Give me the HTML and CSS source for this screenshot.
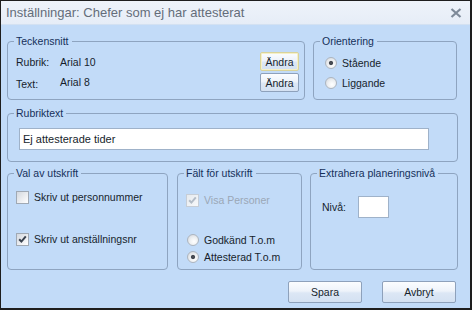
FILE: index.html
```html
<!DOCTYPE html>
<html lang="sv">
<head>
<meta charset="utf-8">
<title>Inställningar</title>
<link rel="stylesheet" href="styles.css">
</head>
<body>
<div class="window">
  <div class="titlebar">
    <span class="title">Inställningar: Chefer som ej har attesterat</span>
    <svg class="close" width="12" height="10" viewBox="0 0 12 10"><path d="M1.5 1 L10.5 9 M10.5 1 L1.5 9" stroke="#7e8a99" stroke-width="2.2" fill="none"/></svg>
  </div>
  <div class="content">
    <div class="row row-top">
      <fieldset class="grp g-font">
        <legend>Teckensnitt</legend>
        <div class="font-grid">
          <span class="lbl">Rubrik:</span><span class="val">Arial 10</span><button class="btn btn-small btn-default">Ändra</button>
          <span class="lbl lbl-low">Text:</span><span class="val val-high">Arial 8</span><button class="btn btn-small">Ändra</button>
        </div>
      </fieldset>
      <fieldset class="grp g-orient">
        <legend>Orientering</legend>
        <div class="orient-list">
          <label class="opt"><span class="radio on"></span>Stående</label>
          <label class="opt"><span class="radio"></span>Liggande</label>
        </div>
      </fieldset>
    </div>
    <fieldset class="grp g-rub">
      <legend>Rubriktext</legend>
      <div class="rub-body"><div class="textbox textbox-wide">Ej attesterade tider</div></div>
    </fieldset>
    <div class="row row-bottom">
      <fieldset class="grp g-val">
        <legend>Val av utskrift</legend>
        <div class="val-list">
          <label class="opt"><span class="check"></span>Skriv ut personnummer</label>
          <label class="opt"><span class="check"><svg width="11" height="11" viewBox="0 0 11 11"><path d="M2.2 5.2 L4.4 7.6 L8.8 2.4" stroke="#3a4350" stroke-width="2" fill="none"/></svg></span>Skriv ut anställningsnr</label>
        </div>
      </fieldset>
      <fieldset class="grp g-falt">
        <legend>Fält för utskrift</legend>
        <div class="falt-list">
          <label class="opt disabled"><span class="check dis"><svg width="11" height="11" viewBox="0 0 11 11"><path d="M2.2 5.2 L4.4 7.6 L8.8 2.4" stroke="#b3bcc7" stroke-width="2" fill="none"/></svg></span>Visa Personer</label>
          <div class="falt-radios">
            <label class="opt"><span class="radio"></span>Godkänd T.o.m</label>
            <label class="opt"><span class="radio on"></span>Attesterad T.o.m</label>
          </div>
        </div>
      </fieldset>
      <fieldset class="grp g-extra">
        <legend>Extrahera planeringsnivå</legend>
        <div class="extra-body">
          <span class="niva-lbl">Nivå:</span><div class="textbox textbox-small"></div>
        </div>
      </fieldset>
    </div>
    <div class="actions">
      <button class="btn btn-big">Spara</button>
      <button class="btn btn-big">Avbryt</button>
    </div>
  </div>
</div>
</body>
</html>
```
FILE: styles.css
```css
html, body {
  margin: 0;
  padding: 0;
  background: #c2dbf8;
}
* { box-sizing: border-box; }

.window {
  width: 472px;
  height: 310px;
  border-top: 1px solid #1e1e1e;
  border-left: 1px solid #1e1e1e;
  border-right: 2px solid #1e1e1e;
  border-bottom: 2px solid #1e1e1e;
  background: #c2dbf8;
  font-family: "Liberation Sans", Arial, sans-serif;
  font-size: 10.5px;
  color: #161e2c;
  overflow: hidden;
}

.titlebar {
  height: 24px;
  display: flex;
  align-items: center;
  justify-content: space-between;
  padding: 0 8px 0 5px;
  background: linear-gradient(#eef3fa, #e6edf7);
  border-bottom: 1px solid #d3e1f2;
}
.title {
  font-size: 13px;
  color: #646d7a;
}
.close { margin-top: 1px; }

.content {
  padding: 10px 0 0 6px;
}

.row { display: flex; }
.row-top { gap: 8px; height: 65px; }
.row-bottom { gap: 8px; height: 103px; margin-top: 5px; }

.grp {
  margin: 0;
  padding: 0;
  min-width: 0;
  border: 1px solid #8ea4c0;
  border-radius: 4px;
  height: 100%;
}
.grp legend {
  margin-left: 6px;
  padding: 0 3px 0 2px;
  line-height: 13px;
  font-size: 10.5px;
  color: #15305a;
}

.g-font { width: 298px; }
.g-orient { width: 144px; }
.g-rub { width: 451px; height: 55px; margin-top: 7px; }
.g-val { width: 161px; }
.g-falt { width: 125px; margin-left: 1px; }
.g-extra { width: 148px; }

.font-grid {
  display: grid;
  grid-template-columns: 44px 1fr 39px;
  grid-template-rows: 19px 19px;
  row-gap: 2px;
  align-items: center;
  padding: 4px 5px 0 8px;
}
.lbl-low { padding-top: 3px; }
.val-high { padding-bottom: 1px; }

.orient-list {
  display: flex;
  flex-direction: column;
  gap: 4px;
  padding: 7px 0 0 11px;
}

.opt {
  display: flex;
  align-items: center;
  gap: 5px;
  height: 16px;
  white-space: nowrap;
}
.opt.disabled { color: #9ba7b6; }

.radio {
  width: 12px;
  height: 12px;
  border-radius: 50%;
  border: 1px solid #adb5bf;
  background: radial-gradient(circle at 60% 65%, #ffffff 0, #eef0f2 45%, #cfd4da 100%);
  flex: none;
}
.radio.on {
  background:
    radial-gradient(circle, #474b53 0, #474b53 1.6px, rgba(71,75,83,0) 2.6px),
    radial-gradient(circle at 60% 65%, #ffffff 0, #eef0f2 45%, #cfd4da 100%);
}

.check {
  width: 13px;
  height: 13px;
  border: 1px solid #a0a9b4;
  background: linear-gradient(135deg, #d3d8df 0, #f2f3f5 70%, #ffffff 100%);
  flex: none;
  display: flex;
  align-items: center;
  justify-content: center;
}
.check.dis {
  border-color: #c6cdd6;
  background: linear-gradient(135deg, #e6eaee 0, #f7f8fa 100%);
}

.rub-body { padding: 8px 0 0 11px; }
.textbox {
  background: #ffffff;
  border: 1px solid #9fb2c9;
  height: 22px;
  display: flex;
  align-items: center;
  padding-left: 3px;
  font-size: 11px;
  color: #161e2c;
}
.textbox-wide { width: 410px; }
.textbox-small { width: 31px; }

.val-list {
  display: flex;
  flex-direction: column;
  gap: 26px;
  padding: 9px 0 0 8px;
}
.falt-list {
  display: flex;
  flex-direction: column;
  gap: 24px;
  padding: 12px 0 0 8px;
}
.falt-radios {
  display: flex;
  flex-direction: column;
  gap: 1px;
}
.falt-radios .radio { margin-left: 1px; }

.extra-body {
  display: flex;
  align-items: center;
  padding: 16px 0 0 11px;
}
.niva-lbl { width: 36px; }

.btn {
  font-family: "Liberation Sans", Arial, sans-serif;
  font-size: 10.5px;
  color: #161e2c;
  border: 1px solid #8ea1bb;
  border-radius: 2px;
  background: linear-gradient(#fbfdff 0, #eef3fa 45%, #dce7f5 55%, #d4e1f2 100%);
  padding: 0;
  margin: 0;
}
.btn-small { width: 39px; height: 19px; }
.btn-default {
  border-color: #d9d39a;
  box-shadow: inset 0 0 0 1px #f5f0c8;
}
.btn-big { width: 74px; height: 22px; }

.actions {
  display: flex;
  justify-content: flex-end;
  gap: 20px;
  width: 451px;
  padding-right: 2px;
  margin-top: 11px;
}
```
